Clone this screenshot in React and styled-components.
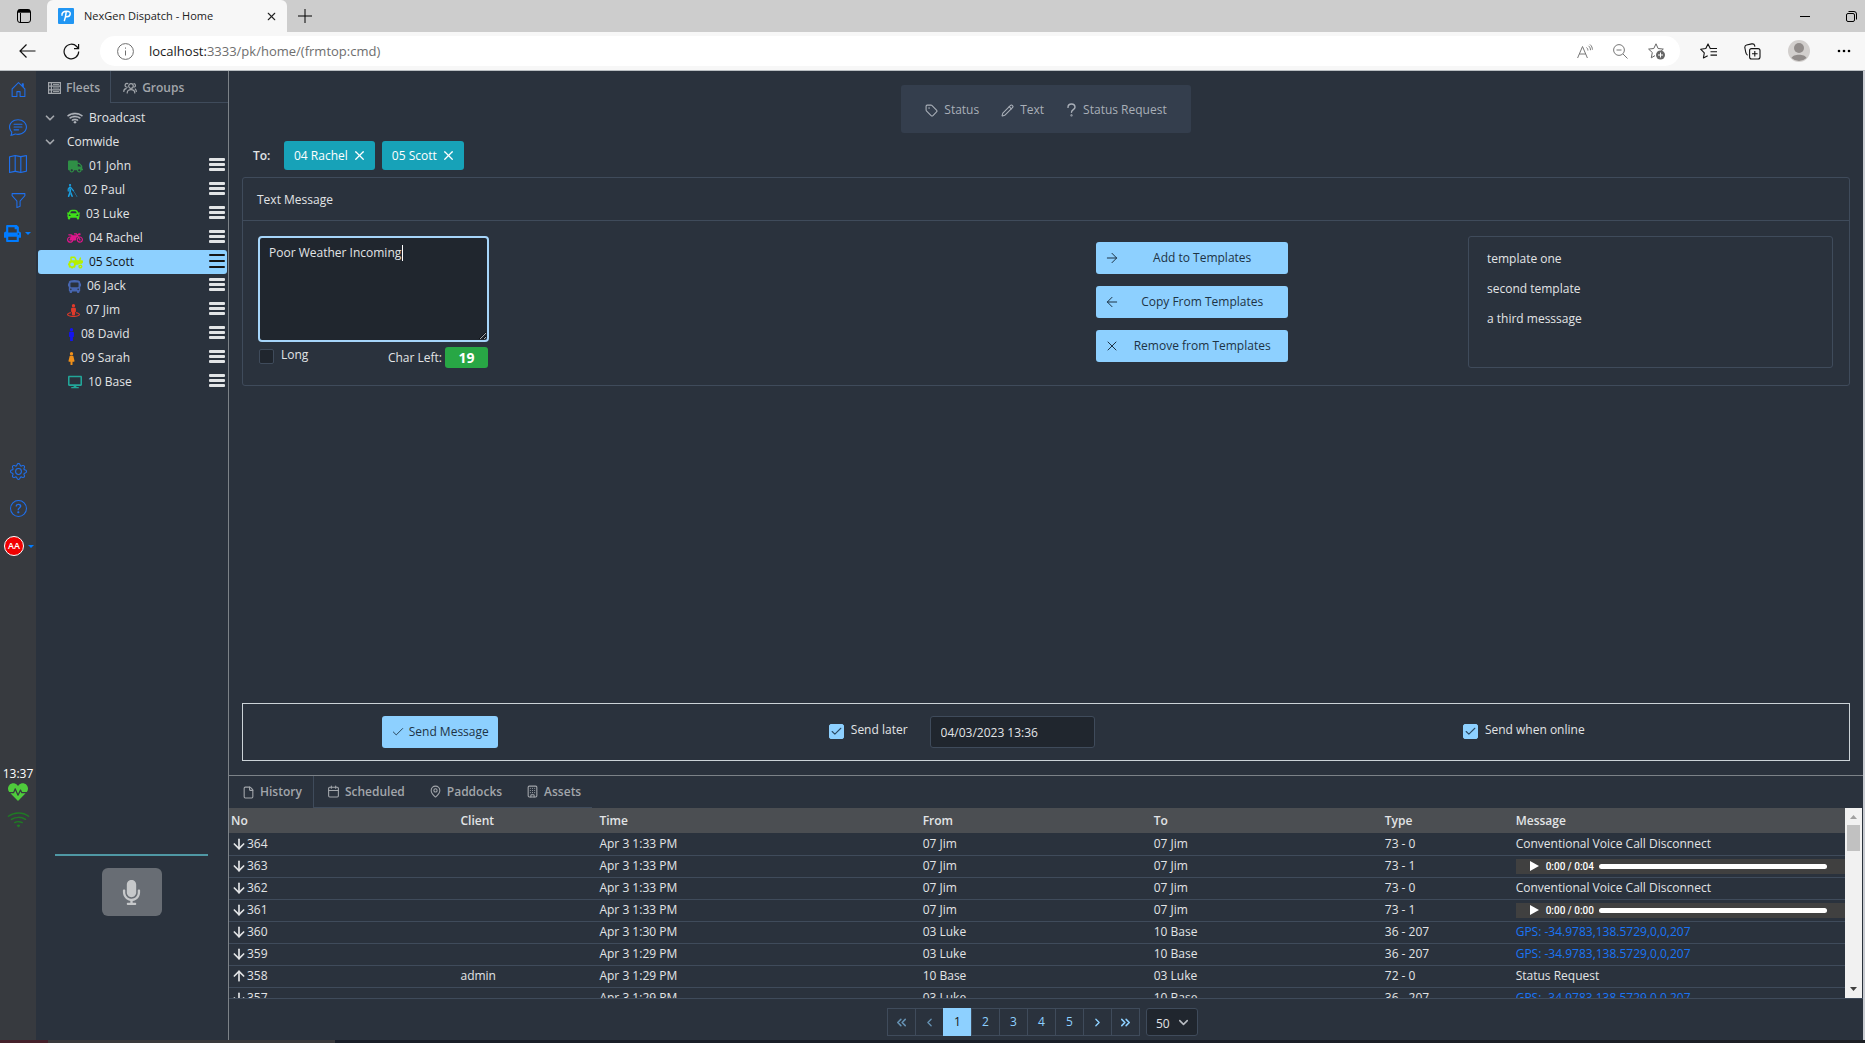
import React, { useEffect, useRef, useState } from 'react';
import styled, { createGlobalStyle, css } from 'styled-components';
// icons
import { FaBlind, FaBus, FaCar, FaDesktop, FaFemale, FaHeartbeat, FaMale, FaMicrophone, FaMotorcycle, FaPrint, FaStreetView, FaTractor, FaTruck } from 'react-icons/fa';
import { BsChatText, BsFunnel, BsGear, BsHouseDoor, BsMap, BsQuestionCircle, BsWifi } from 'react-icons/bs';
import { ArrowDown, ArrowLeft, ArrowRight, ArrowUp, Building, Calendar, Check, ChevronDown, ChevronLeft, ChevronRight, ChevronsLeft, ChevronsRight, File, MapPin, Pencil, Tag, X } from 'lucide-react';

const fleet = [
  { name: '01 John', icon: FaTruck, color: '#2f8f46', size: 15, width: 16 },
  { name: '02 Paul', icon: FaBlind, color: '#1a9fe0', size: 13, width: 11 },
  { name: '03 Luke', icon: FaCar, color: '#3fe01a', size: 13, width: 13 },
  { name: '04 Rachel', icon: FaMotorcycle, color: '#e0168c', size: 16, width: 16 },
  { name: '05 Scott', icon: FaTractor, color: '#b6f000', size: 15, width: 16, selected: true },
  { name: '06 Jack', icon: FaBus, color: '#4766b0', size: 13, width: 14 },
  { name: '07 Jim', icon: FaStreetView, color: '#e03a2a', size: 13, width: 13 },
  { name: '08 David', icon: FaMale, color: '#1414f0', size: 13, width: 8 },
  { name: '09 Sarah', icon: FaFemale, color: '#f0901a', size: 13, width: 8 },
  { name: '10 Base', icon: FaDesktop, color: '#22a699', size: 14, width: 15 },
];

const history = [
  { no: 364, time: 'Apr 3 1:33 PM', from: '07 Jim', to: '07 Jim', type: '73 - 0', message: 'Conventional Voice Call Disconnect' },
  { no: 363, time: 'Apr 3 1:33 PM', from: '07 Jim', to: '07 Jim', type: '73 - 1', audio: '0:00 / 0:04' },
  { no: 362, time: 'Apr 3 1:33 PM', from: '07 Jim', to: '07 Jim', type: '73 - 0', message: 'Conventional Voice Call Disconnect' },
  { no: 361, time: 'Apr 3 1:33 PM', from: '07 Jim', to: '07 Jim', type: '73 - 1', audio: '0:00 / 0:00' },
  { no: 360, time: 'Apr 3 1:30 PM', from: '03 Luke', to: '10 Base', type: '36 - 207', gps: 'GPS: -34.9783,138.5729,0,0,207' },
  { no: 359, time: 'Apr 3 1:29 PM', from: '03 Luke', to: '10 Base', type: '36 - 207', gps: 'GPS: -34.9783,138.5729,0,0,207' },
  { no: 358, up: true, client: 'admin', time: 'Apr 3 1:29 PM', from: '10 Base', to: '03 Luke', type: '72 - 0', message: 'Status Request' },
  { no: 357, time: 'Apr 3 1:29 PM', from: '03 Luke', to: '10 Base', type: '36 - 207', gps: 'GPS: -34.9783,138.5729,0,0,207' },
];

const ServerIcon = () => (
  <svg width="13" height="12" viewBox="0 0 13 12" fill="none" stroke="currentColor" strokeWidth="1.2">
    <path d="M.6.6h11.8v10.8H.6zM.6 4.2h11.8M.6 7.8h11.8M3.4.6v10.8" />
    <path d="M5 2.4h6M5 6h6M5 9.6h6" strokeWidth="1" />
  </svg>
);

const UsersIcon = () => (
  <svg width="14" height="12" viewBox="0 0 14 12" fill="none" stroke="currentColor" strokeWidth="1.2" strokeLinecap="round">
    <circle cx="8" cy="4" r="2.3" />
    <path d="M4.2 11c0-2.4 1.5-3.4 3.8-3.4s3.8 1 3.8 3.4M4.8 1.6a1.9 1.9 0 1 0-.6 3.6M.8 9.4c0-1.8.9-2.6 2.4-2.8M11 1.6c1.8.3 1.8 2.8.6 3.4M13.3 9.4c0-1.4-.4-2-1.1-2.4" />
  </svg>
);

const QuestionIcon = () => (
  <svg width="11" height="14" viewBox="0 0 11 14" fill="none" stroke="currentColor" strokeWidth="1.4" strokeLinecap="round">
    <path d="M2 4.4C2 2.3 3.5 1 5.5 1S9 2.3 9 4.2c0 2.4-3.5 2.4-3.5 5" />
    <circle cx="5.5" cy="12.4" r=".4" />
  </svg>
);

const CheckField = ({ label, checked }) => {
  const [on, setOn] = useState(!!checked);
  return (
    <CheckLabel>
      <CheckBox>
        <input type="checkbox" checked={on} onChange={() => setOn(!on)} />
        {on && <Check size={13} strokeWidth={2} />}
      </CheckBox>
      <span>{label}</span>
    </CheckLabel>
  );
};

const BrowserBar = () => (
  <header>
    <TabStrip>
      <StripButton aria-label="Tab actions">
        <svg width="14" height="14" viewBox="0 0 14 14" fill="none" stroke="#000"><rect x=".5" y=".5" width="13" height="13" rx="2.5" /><path d="M1 2.2h12" strokeWidth="3" /><path d="M3.5 4v9" /></svg>
      </StripButton>
      <BrowserTab>
        <svg width="16" height="16" viewBox="0 0 16 16">
          <rect width="16" height="16" rx="1" fill="#2196f3" />
          <path d="M6.4 12.6c.9-2.4 1.4-5 1.7-8M4 7.2C3.6 5 5.6 3.2 8.6 3.2c2.600 0 4 1.100 3.600 3-.4 1.900-2.400 2.900-4.600 2.500" fill="none" stroke="#fff" strokeWidth="1.500" strokeLinecap="round" />
        </svg>
        <span>NexGen Dispatch - Home</span>
        <button aria-label="Close tab"><X size={13} /></button>
      </BrowserTab>
      <StripButton aria-label="New tab">
        <svg width="14" height="14" viewBox="0 0 14 14" stroke="#000"><path d="M7 0v14M0 7h14" /></svg>
      </StripButton>
      <WindowButtons>
        <button aria-label="Minimize"><svg width="10" height="11" viewBox="0 0 10 11" stroke="#000"><path d="M0 5.500h10" /></svg></button>
        <button aria-label="Restore"><svg width="11" height="11" viewBox="0 0 11 11" fill="none" stroke="#000"><rect x=".5" y="2.500" width="8" height="8" rx="1.500" /><path d="M2.500.5h5.500a2.500 2.500 0 0 1 2.500 2.500v5.500" /></svg></button>
      </WindowButtons>
    </TabStrip>
    <NavRow>
      <button aria-label="Back"><svg width="17" height="14" viewBox="0 0 17 14" fill="none" stroke="#111" strokeWidth="1.200"><path d="M7.500.5 1 7l6.500 6.500M1 7h15.500" /></svg></button>
      <button aria-label="Refresh"><svg width="17" height="17" viewBox="0 0 17 17" fill="none" stroke="#111" strokeWidth="1.200"><path d="M15.700 8.500a7.300 7.300 0 1 1-2-5L15.500 5.500M15.600 1v4.600H11" /></svg></button>
      <AddressField>
        <svg width="17" height="17" viewBox="0 0 17 17" fill="none" stroke="#6e6e6e"><circle cx="8.500" cy="8.500" r="7.900" /><path d="M8.500 7.500v5M8.500 4.500v1.200" /></svg>
        <Url><b>localhost:</b>3333/pk/home/(frmtop:cmd)</Url>
        <AddressTools>
          <svg width="16" height="15" viewBox="0 0 16 15" fill="none" stroke="#777"><path d="M.6 14 5.500 2.500 10.400 14M2.300 10h6.400M9.500 3.500c1 .8 1.400 1.800 1.400 3M11.500 1.800c1.400 1.200 2 2.600 2 4.400M13 .5c1.700 1.500 2.400 3.200 2.400 5.200" /></svg>
          <svg width="15" height="15" viewBox="0 0 15 15" fill="none" stroke="#777"><circle cx="6" cy="6" r="5.400" /><path d="M3.500 6h5M10 10l4.500 4.500" /></svg>
          <svg width="18" height="17" viewBox="0 0 18 17" fill="none" stroke="#666"><path d="m8 .8 2.100 4.700 5.200.6-3.300 3M7 12.600l-3.700 2.200 1-5.300L.6 6.100l5.200-.6L8 .8" strokeLinejoin="round" /><circle cx="12.500" cy="12" r="4.500" fill="#666" stroke="none" /><path d="M12.500 9.500v5M10 12h5" stroke="#fff" /></svg>
        </AddressTools>
      </AddressField>
      <NavTools>
        <svg width="17" height="16" viewBox="0 0 17 16" fill="none" stroke="#111" strokeWidth="1.100" strokeLinejoin="round"><path d="M10.500 6 8 .9 5.800 5.500.6 6.200l3.700 3.600-.9 5.200 4.300-2.300M10.500 5.500H17M10.500 8.800H17M10.500 12.100H17" /></svg>
        <svg width="17" height="17" viewBox="0 0 17 17" fill="none" stroke="#111" strokeWidth="1.100"><rect x="5.600" y="5.600" width="10.400" height="10.400" rx="2" /><path d="M10.800 8v5.600M8 10.800h5.600M3.600 12.200C2 11.500 2 10.500 1.600 8.500L.9 5c-.3-1.700.3-2.700 1.700-3L7.700.9c1.700-.3 2.700.2 3 1.700l.2 1" /></svg>
        <svg width="22" height="22" viewBox="0 0 22 22"><circle cx="11" cy="11" r="11" fill="#d2cfcd" /><circle cx="11" cy="8" r="5" fill="#918c8a" /><path d="M3.500 18c1.500-4.500 13.500-4.500 15 0a11 11 0 0 1-15 0z" fill="#918c8a" /></svg>
        <svg width="14" height="4" viewBox="0 0 14 4"><circle cx="2" cy="2" r="1.300" /><circle cx="7" cy="2" r="1.300" /><circle cx="12" cy="2" r="1.300" /></svg>
      </NavTools>
    </NavRow>
  </header>
);

const Fleets = () => (
  <SidePanel>
    <SideTabs>
      <SideTab $active><ServerIcon />Fleets</SideTab>
      <SideTab><UsersIcon />Groups</SideTab>
    </SideTabs>
    <Tree>
      <TreeRow><TreeArrow><ChevronDown size={14} strokeWidth={3} /></TreeArrow><BsWifi size={16} color="#b8bcc2" stroke="#b8bcc2" strokeWidth={0.6} />Broadcast</TreeRow>
      <TreeRow><TreeArrow><ChevronDown size={14} strokeWidth={3} /></TreeArrow>Comwide</TreeRow>
      {fleet.map((unit) => {
        const Icon = unit.icon;
        return (
          <TreeRow key={unit.name} $leaf $selected={unit.selected}>
            <UnitIcon $width={unit.width}><Icon size={unit.size} color={unit.color} /></UnitIcon>
            {unit.name}
            <Burger aria-label={`${unit.name} menu`} $thin={unit.selected}><i /><i /><i /></Burger>
          </TreeRow>
        );
      })}
    </Tree>
    <Talk>
      <TalkLine />
      <TalkButton aria-label="Push to talk"><FaMicrophone size={25} /></TalkButton>
    </Talk>
  </SidePanel>
);

const Player = ({ label }) => (
  <PlayerBar>
    <button aria-label="Play"><svg width="9" height="10" viewBox="0 0 9 10" fill="#fff"><path d="M0 0l9 5-9 5z" /></svg></button>
    <span>{label}</span>
    <PlayerTrack />
  </PlayerBar>
);

const Composer = ({ text, setText }) => {
  const textRef = useRef(null);
  const [cursorX, setCursorX] = useState(0);

  // text width up to the cursor
  const moveCursor = () => {
    const el = textRef.current;
    const ctx = document.createElement('canvas').getContext('2d');
    ctx.font = '12px "Open Sans"';
    setCursorX(ctx.measureText(el.value.slice(0, el.selectionStart)).width);
  };

  useEffect(() => {
    const el = textRef.current;
    el.focus();
    el.setSelectionRange(el.value.length, el.value.length);
    moveCursor();
  }, []);

  return (
    <MessageField>
      <MessageBox ref={textRef} aria-label="Text message" value={text} onChange={(e) => setText(e.target.value)} onSelect={moveCursor} />
      <Cursor style={{ left: Math.round(cursorX) + 12 }} />
    </MessageField>
  );
};

const App = () => {
  const [text, setText] = useState('Poor Weather Incoming');
  const [sendAt, setSendAt] = useState('04/03/2023 13:36');

  return (
    <>
      <GlobalStyle />
      <Screen>
        <BrowserBar />
        <Shell>
          <Rail>
            <RailGroup>
              <RailLink href="#home" aria-label="Home"><BsHouseDoor size={17} /></RailLink>
              <RailLink href="#messages" aria-label="Messages"><BsChatText size={18} /></RailLink>
              <RailLink href="#map" aria-label="Map"><BsMap size={18} /></RailLink>
              <RailLink href="#filter" aria-label="Filter"><BsFunnel size={17} /></RailLink>
              <RailMenu aria-label="Print"><FaPrint size={17} /><Caret /></RailMenu>
            </RailGroup>
            <RailGroup>
              <RailLink href="#settings" aria-label="Settings"><BsGear size={17} /></RailLink>
              <RailLink href="#help" aria-label="Help"><BsQuestionCircle size={17} /></RailLink>
              <RailMenu aria-label="Account" $tall><Avatar>AA</Avatar><Caret /></RailMenu>
            </RailGroup>
            <RailStatus>
              <span>13:37</span>
              <FaHeartbeat size={20} color="#4fcb3c" />
              <BsWifi size={23} color="#1f7a24" />
            </RailStatus>
          </Rail>
          <Fleets />
          <Main>
            <Command>
              <MenuBar>
                <button><Tag size={13} />Status</button>
                <button><Pencil size={13} />Text</button>
                <button><QuestionIcon />Status Request</button>
              </MenuBar>
              <ToRow>
                <b>To:</b>
                {['04 Rachel', '05 Scott'].map((name) => (
                  <Chip key={name}>{name}<X size={15} strokeWidth={2} /></Chip>
                ))}
              </ToRow>
              <Panel>
                <PanelHead>Text Message</PanelHead>
                <PanelBody>
                  <Compose>
                    <Composer text={text} setText={setText} />
                    <ComposeFoot>
                      <CheckField label="Long" />
                      <CharLeft>Char Left: <b>{40 - text.length}</b></CharLeft>
                    </ComposeFoot>
                  </Compose>
                  <TemplateButtons>
                    <PrimaryButton><ArrowRight size={16} strokeWidth={1.5} /><span>Add to Templates</span></PrimaryButton>
                    <PrimaryButton><ArrowLeft size={16} strokeWidth={1.5} /><span>Copy From Templates</span></PrimaryButton>
                    <PrimaryButton><X size={16} strokeWidth={1.5} /><span>Remove from Templates</span></PrimaryButton>
                  </TemplateButtons>
                  <TemplateList>
                    <li>template one</li>
                    <li>second template</li>
                    <li>a third messsage</li>
                  </TemplateList>
                </PanelBody>
              </Panel>
              <SendBar>
                <PrimaryButton><Check size={14} strokeWidth={1.5} /><span>Send Message</span></PrimaryButton>
                <SendLater>
                  <CheckField label="Send later" checked />
                  <input type="text" aria-label="Send at" value={sendAt} onChange={(e) => setSendAt(e.target.value)} />
                </SendLater>
                <CheckField label="Send when online" checked />
              </SendBar>
            </Command>
            <LogTabs>
              <LogTab $active><File size={13} />History</LogTab>
              <LogTab><Calendar size={13} />Scheduled</LogTab>
              <LogTab><MapPin size={13} />Paddocks</LogTab>
              <LogTab><Building size={13} />Assets</LogTab>
            </LogTabs>
            <LogArea>
              <TableScroll tabIndex={0}>
                <LogTable>
                  <colgroup>
                    <col width="14.2%" /><col width="8.6%" /><col width="20%" /><col width="14.3%" /><col width="14.3%" /><col width="8.1%" /><col />
                  </colgroup>
                  <thead>
                    <tr><th>No</th><th>Client</th><th>Time</th><th>From</th><th>To</th><th>Type</th><th>Message</th></tr>
                  </thead>
                  <tbody>
                    {history.map((row) => (
                      <tr key={row.no}>
                        <td><NoCell>{row.up ? <ArrowUp size={16} strokeWidth={2.5} /> : <ArrowDown size={16} strokeWidth={2.5} />}{row.no}</NoCell></td>
                        <td>{row.client}</td>
                        <td>{row.time}</td>
                        <td>{row.from}</td>
                        <td>{row.to}</td>
                        <td>{row.type}</td>
                        <td>{row.audio ? <Player label={row.audio} /> : row.gps ? <a href="#gps">{row.gps}</a> : row.message}</td>
                      </tr>
                    ))}
                  </tbody>
                </LogTable>
              </TableScroll>
              <ScrollTrack>
                <svg width="7" height="4" viewBox="0 0 7 4" fill="#a0a0a0"><path d="M0 4l3.500-4L7 4z" /></svg>
                <ScrollThumb />
                <svg width="7" height="4" viewBox="0 0 7 4" fill="#404040"><path d="M0 0l3.500 4L7 0z" /></svg>
              </ScrollTrack>
            </LogArea>
            <Pager>
              <Pages>
                <PageButton aria-label="First page" disabled><ChevronsLeft size={15} strokeWidth={2.5} /></PageButton>
                <PageButton aria-label="Previous page" disabled><ChevronLeft size={13} strokeWidth={2.5} /></PageButton>
                {[1, 2, 3, 4, 5].map((page) => (
                  <PageButton key={page} $active={page === 1}>{page}</PageButton>
                ))}
                <PageButton aria-label="Next page"><ChevronRight size={13} strokeWidth={2.5} /></PageButton>
                <PageButton aria-label="Last page"><ChevronsRight size={15} strokeWidth={2.5} /></PageButton>
              </Pages>
              <PageSize>
                <select aria-label="Rows per page" defaultValue="50">
                  <option>25</option>
                  <option>50</option>
                </select>
                <ChevronDown size={15} strokeWidth={2.5} />
              </PageSize>
            </Pager>
          </Main>
        </Shell>
        <TaskEdge />
      </Screen>
    </>
  );
};

export default App;

const GlobalStyle = createGlobalStyle`
  *, *::before, *::after {
    box-sizing: border-box;
  }
  body {
    margin: 0;
    background: #2a323d;
    color: #e2e4e6;
    font: 12px/16px "Open Sans", "Noto Sans", sans-serif;
  }
  button, input, select, textarea {
    font: inherit;
    color: inherit;
  }
  button {
    border: 0;
    padding: 0;
    background: none;
    cursor: pointer;
  }
  ul {
    margin: 0;
    padding: 0;
    list-style: none;
  }
  a {
    color: #1a75f5;
    text-decoration: none;
  }
  svg {
    display: block;
    flex: none;
  }
`;

const Screen = styled.div`
  display: flex;
  flex-direction: column;
  min-height: 100vh;
`;

/* browser */
const TabStrip = styled.div`
  display: flex;
  align-items: center;
  height: 32px;
  background: #cdcdcd;
`;

const StripButton = styled.button`
  display: grid;
  place-items: center;
  width: 47px;
  height: 32px;
  &:not(:first-child) {
    width: 35px;
  }
`;

const BrowserTab = styled.div`
  display: flex;
  align-items: center;
  gap: 10px;
  width: 240px;
  height: 32px;
  padding: 0 9px 0 11px;
  border-radius: 6px 6px 0 0;
  background: #f7f7f7;
  color: #222;
  font-size: 11px;
  span {
    flex: 1;
    white-space: nowrap;
  }
`;

const WindowButtons = styled.div`
  display: flex;
  gap: 36px;
  margin-left: auto;
  padding-right: 8px;
`;

const NavRow = styled.div`
  display: flex;
  align-items: center;
  height: 39px;
  padding-left: 19px;
  background: #f7f7f7;
  border-bottom: 1px solid #b9bec2;
  > button {
    margin-right: 27px;
  }
`;

const AddressField = styled.div`
  display: flex;
  align-items: center;
  flex: 1;
  gap: 15px;
  height: 30px;
  padding: 0 14px 0 17px;
  margin-left: -7px;
  border-radius: 15px;
  background: #fff;
`;

const Url = styled.span`
  color: #6e6e6e;
  font-size: 13px;
  b {
    color: #1a1a1a;
    font-weight: 400;
  }
`;

const AddressTools = styled.div`
  display: flex;
  align-items: center;
  gap: 20px;
  margin-left: auto;
`;

const NavTools = styled.div`
  display: flex;
  align-items: center;
  gap: 27px;
  padding: 0 14px 0 20px;
`;

/* app frame */
const Shell = styled.div`
  display: flex;
  flex: 1;
  border-right: 2px solid #c9ccd2;
`;

const Rail = styled.nav`
  display: flex;
  flex-direction: column;
  width: 36px;
  background: #373a3f;
  color: #1f6feb;
`;

const RailGroup = styled.div`
  display: flex;
  flex-direction: column;
  & + & {
    margin-top: 205px;
  }
`;

const RailLink = styled.a`
  display: grid;
  place-items: center;
  height: 37px;
  color: #1f6feb;
`;

const RailMenu = styled.button`
  display: flex;
  align-items: center;
  gap: 4px;
  height: ${({ $tall }) => ($tall ? '38px' : '29px')};
  padding-left: 4px;
  color: #007bff;
`;

const Caret = styled.i`
  border: 3px solid transparent;
  border-top-color: #007bff;
  border-bottom: 0;
`;

const Avatar = styled.span`
  display: grid;
  place-items: center;
  width: 20px;
  height: 20px;
  border: 1px solid #fff;
  border-radius: 50%;
  background: #f00000;
  color: #fff;
  font-size: 9px;
  font-weight: 600;
`;

const RailStatus = styled.div`
  display: flex;
  flex-direction: column;
  align-items: center;
  margin-top: auto;
  padding-bottom: 209px;
  color: #fff;
  svg + svg {
    margin-top: 6px;
  }
`;

const SidePanel = styled.aside`
  display: flex;
  flex-direction: column;
  width: 193px;
  border-right: 1px solid #7c8288;
`;

const SideTabs = styled.div`
  display: flex;
  height: 32px;
  box-shadow: inset 0 -1px #3f4b5b;
`;

const tabLook = css`
  display: flex;
  align-items: center;
  gap: 5px;
  color: #a2a6ab;
  font-weight: 600;
`;

const SideTab = styled.button`
  ${tabLook}
  padding: 2px 10px 0 12px;
  border-right: ${({ $active }) => ($active ? '1px solid #3f4b5b' : '0')};
  background: ${({ $active }) => ($active ? '#2a323d' : 'none')};
`;

const Tree = styled.ul`
  padding: 3px 1px 0 2px;
`;

const TreeRow = styled.li`
  display: flex;
  align-items: center;
  gap: 6px;
  height: 24px;
  padding: 0 2px 0 ${({ $leaf }) => ($leaf ? '29px' : '5px')};
  border-radius: 3px;
  background: ${({ $selected }) => ($selected ? '#8dd0ff' : 'none')};
  color: ${({ $selected }) => ($selected ? '#151515' : 'inherit')};
`;

const TreeArrow = styled.span`
  width: 18px;
  color: #a2a6ab;
`;

const UnitIcon = styled.span`
  display: flex;
  justify-content: center;
  width: ${({ $width }) => $width}px;
`;

const Burger = styled.button`
  display: flex;
  flex-direction: column;
  gap: ${({ $thin }) => ($thin ? '4px' : '2px')};
  width: 16px;
  margin: 0 0 3px auto;
  i {
    height: ${({ $thin }) => ($thin ? '2px' : '3px')};
    border-radius: 1px;
    background: currentColor;
  }
`;

const Talk = styled.div`
  display: flex;
  flex-direction: column;
  align-items: center;
  gap: 12px;
  margin-top: auto;
  padding: 0 20px 124px 19px;
`;

const TalkLine = styled.div`
  width: 100%;
  height: 2px;
  background: #4f98a5;
`;

const TalkButton = styled.button`
  display: grid;
  place-items: center;
  width: 60px;
  height: 48px;
  border-radius: 6px;
  background: #686d74;
  color: #c6c8ca;
`;

const Main = styled.main`
  display: flex;
  flex-direction: column;
  flex: 1;
  min-width: 0;
`;

/* message area */
const Command = styled.section`
  display: flex;
  flex-direction: column;
  flex: 1;
  padding: 14px 13px;
  border-bottom: 1px solid #7c8288;
`;

const MenuBar = styled.div`
  display: flex;
  align-self: center;
  gap: 22px;
  padding: 17px 24px 15px;
  border-radius: 3px;
  background: #343e4d;
  color: #a9afb8;
  button {
    display: flex;
    align-items: center;
    gap: 6px;
  }
`;

const ToRow = styled.div`
  display: flex;
  align-items: center;
  gap: 7px;
  padding: 8px 11px 7px;
  b {
    width: 24px;
    font-weight: 600;
  }
`;

const Chip = styled.button`
  display: flex;
  align-items: center;
  gap: 4px;
  height: 29px;
  padding: 0 8px 0 10px;
  border-radius: 3px;
  background: #17a2b8;
  color: #fff;
`;

const Panel = styled.div`
  border: 1px solid #3f4b5b;
  border-radius: 3px;
`;

const PanelHead = styled.h2`
  margin: 0;
  padding: 14px 14px 12px;
  border-bottom: 1px solid #3f4b5b;
  font: inherit;
`;

const PanelBody = styled.div`
  display: grid;
  grid-template-columns: 20fr 192px 13fr;
  padding: 15px 16px 17px 15px;
`;

const Compose = styled.div`
  width: 231px;
`;

const MessageField = styled.div`
  position: relative;
`;

const MessageBox = styled.textarea`
  display: block;
  width: 100%;
  height: 106px;
  padding: 7px 9px;
  border: 2px solid #a6d5fa;
  border-radius: 4px;
  outline: 0;
  background: #20262e;
  caret-color: transparent;
`;

const Cursor = styled.i`
  position: absolute;
  top: 9px;
  width: 1px;
  height: 16px;
  background: #fff;
  pointer-events: none;
`;

const ComposeFoot = styled.div`
  display: flex;
  justify-content: space-between;
  padding: 5px 1px 0;
`;

const CheckLabel = styled.label`
  display: flex;
  gap: 7px;
`;

const CheckBox = styled.span`
  display: grid;
  place-items: center;
  margin-top: 2px;
  width: 15px;
  height: 15px;
  input,
  svg {
    grid-area: 1 / 1;
  }
  input {
    appearance: none;
    width: 15px;
    height: 15px;
    margin: 0;
    border: 1px solid #3f4b5b;
    border-radius: 2px;
    background: #20262e;
  }
  input:checked {
    border-color: #8dd0ff;
    background: #8dd0ff;
  }
  svg {
    color: #2b4a63;
    pointer-events: none;
  }
`;

const CharLeft = styled.div`
  display: flex;
  align-items: center;
  gap: 3px;
  b {
    width: 43px;
    border-radius: 3px;
    background: #28a745;
    color: #fff;
    font-size: 14px;
    line-height: 21px;
    text-align: center;
  }
`;

const TemplateButtons = styled.div`
  display: flex;
  flex-direction: column;
  gap: 12px;
  padding-top: 6px;
`;

const PrimaryButton = styled.button`
  display: flex;
  align-items: center;
  gap: 4px;
  height: 32px;
  padding: 0 9px;
  border-radius: 3px;
  background: #8dd0ff;
  color: #1d3345;
  ${TemplateButtons} & {
    padding: 0 8px;
  }
  ${TemplateButtons} & span {
    flex: 1;
    text-align: center;
  }
`;

const TemplateList = styled.ul`
  justify-self: end;
  width: 67%;
  height: 132px;
  padding: 7px 18px;
  border: 1px solid #3f4b5b;
  border-radius: 3px;
  li {
    line-height: 30px;
  }
`;

const SendBar = styled.div`
  display: grid;
  grid-template-columns: 49fr 81fr 59fr 11fr;
  place-items: center;
  height: 58px;
  margin-top: auto;
  border: 1px solid #ccd3d8;
  > label {
    padding-bottom: 4px;
  }
`;

const SendLater = styled.div`
  display: flex;
  gap: 22px;
  > input {
    width: 165px;
    height: 32px;
    padding: 0 10px;
    border: 1px solid #3f4b5b;
    border-radius: 3px;
    background: #20262e;
  }
  > label {
    padding-top: 6px;
  }
`;

/* history */
const LogTabs = styled.div`
  display: flex;
  height: 32px;
`;

const LogTab = styled.button`
  ${tabLook}
  padding: 0 11px 0 13px;
  border: solid #3f4b5b;
  border-width: ${({ $active }) => ($active ? '0 1px 0 0' : '0 0 1px 0')};
`;

const LogArea = styled.div`
  display: flex;
  height: 191px;
  padding-right: 1px;
  border-bottom: 1px solid #3f4b5b;
`;

const TableScroll = styled.div`
  flex: 1;
  overflow-y: auto;
  scrollbar-width: none;
`;

const LogTable = styled.table`
  width: 100%;
  table-layout: fixed;
  border-collapse: collapse;
  th {
    height: 25px;
    padding: 1px 0 0 2px;
    background: #4b4e52;
    font-weight: 600;
    text-align: left;
  }
  td {
    height: 22px;
    padding: 0 0 0 2px;
    border-bottom: 1px solid #3f4b5b;
  }
`;

const NoCell = styled.span`
  display: flex;
  align-items: center;
`;

const PlayerBar = styled.div`
  display: flex;
  align-items: center;
  height: 15px;
  padding: 0 18px 0 14px;
  background: #404040;
  color: #fff;
  font: 500 10px/15px Roboto, "Liberation Sans", sans-serif;
  span {
    padding: 0 5px 0 7px;
  }
`;

const PlayerTrack = styled.div`
  flex: 1;
  height: 5px;
  border-radius: 3px;
  background: #fff;
`;

const ScrollTrack = styled.div`
  display: flex;
  flex-direction: column;
  align-items: center;
  width: 17px;
  padding: 7px 0;
  background: #f1f1f1;
  svg:last-child {
    margin-top: auto;
  }
`;

const ScrollThumb = styled.div`
  width: 13px;
  height: 26px;
  margin-top: 6px;
  background: #c1c1c1;
`;

const Pager = styled.div`
  display: flex;
  justify-content: center;
  gap: 6px;
  padding: 9px 7px 4px 0;
`;

const Pages = styled.div`
  display: flex;
`;

const PageButton = styled.button`
  display: grid;
  place-items: center;
  width: 29px;
  height: 28px;
  margin-right: -1px;
  border: 1px solid #3f4b5b;
  color: #8dd0ff;
  &:disabled svg {
    opacity: 0.6;
  }
  ${({ $active }) => $active && css`
    border-color: #8dd0ff;
    background: #8dd0ff;
    color: #151515;
  `}
`;

const PageSize = styled.div`
  display: grid;
  align-items: center;
  justify-items: end;
  margin-left: 1px;
  select,
  svg {
    grid-area: 1 / 1;
  }
  select {
    appearance: none;
    width: 52px;
    height: 28px;
    padding: 3px 9px 0;
    border: 1px solid #3f4b5b;
    border-radius: 3px;
    background: #20262e;
  }
  svg {
    margin-right: 7px;
    color: #b8bcc2;
    pointer-events: none;
  }
`;

const TaskEdge = styled.div`
  height: 3px;
  background: linear-gradient(90deg, #45202a 48px, #3a3a3c 48px 335px, #191e28 335px 50%, #1c1f24);
`;
